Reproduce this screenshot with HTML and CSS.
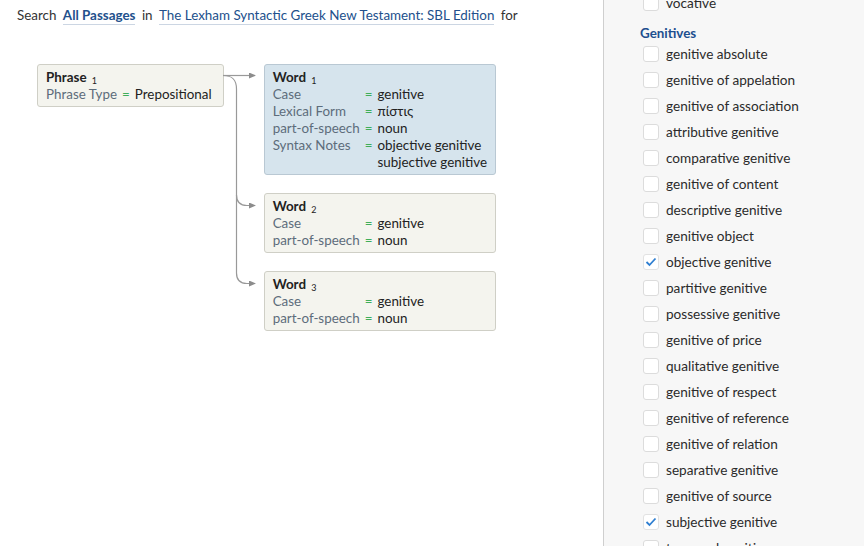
FILE: index.html
```html
<!DOCTYPE html>
<html lang="en">
<head>
    <meta charset="UTF-8">
    <title>Syntax Search</title>
    <link rel="stylesheet" href="styles.css">
</head>
<body>
    <div class="page">
        <main class="query">
            <p class="search-line">
                Search <a class="scope strong">All Passages</a> in <a class="scope">The Lexham Syntactic Greek New Testament: SBL Edition</a> for
            </p>

            <div class="diagram">
                <!-- connectors between the phrase and its words -->
                <svg class="connectors" width="240" height="240" viewBox="0 0 240 240">
                    <defs>
                        <marker id="arrow" markerWidth="7" markerHeight="6" refX="6" refY="3" orient="auto" markerUnits="userSpaceOnUse">
                            <path d="M0,0 L7,3 L0,6 Z" fill="#8c8c8c"/>
                        </marker>
                    </defs>
                    <path d="M186,11.5 H218" class="link" marker-end="url(#arrow)"/>
                    <path d="M186,11.5 C195,11.5 199.5,15 199.5,25 V209 C199.5,216 203,219.5 210,219.5 H218" class="link" marker-end="url(#arrow)"/>
                    <path d="M199.5,131 C199.5,138 203,141.5 210,141.5 H218" class="link" marker-end="url(#arrow)"/>
                </svg>

                <div class="node phrase">
                    <div class="node-title">Phrase <sub>1</sub></div>
                    <div class="props">
                        <span class="key">Phrase Type</span><span class="eq">=</span><span class="val">Prepositional</span>
                    </div>
                </div>

                <div class="words">
                    <div class="node word selected">
                        <div class="node-title">Word <sub>1</sub></div>
                        <div class="props">
                            <span class="key">Case</span><span class="eq">=</span><span class="val">genitive</span>
                            <span class="key">Lexical Form</span><span class="eq">=</span><span class="val">πίστις</span>
                            <span class="key">part-of-speech</span><span class="eq">=</span><span class="val">noun</span>
                            <span class="key">Syntax Notes</span><span class="eq">=</span><span class="val">objective genitive<br>subjective genitive</span>
                        </div>
                    </div>
                    <div class="node word">
                        <div class="node-title">Word <sub>2</sub></div>
                        <div class="props">
                            <span class="key">Case</span><span class="eq">=</span><span class="val">genitive</span>
                            <span class="key">part-of-speech</span><span class="eq">=</span><span class="val">noun</span>
                        </div>
                    </div>
                    <div class="node word">
                        <div class="node-title">Word <sub>3</sub></div>
                        <div class="props">
                            <span class="key">Case</span><span class="eq">=</span><span class="val">genitive</span>
                            <span class="key">part-of-speech</span><span class="eq">=</span><span class="val">noun</span>
                        </div>
                    </div>
                </div>
            </div>
        </main>

        <aside class="filters">
            <div class="filter-scroll">
                <label class="option"><span class="box"></span>vocative</label>

                <h3 class="group">Genitives</h3>
                <label class="option"><span class="box"></span>genitive absolute</label>
                <label class="option"><span class="box"></span>genitive of appelation</label>
                <label class="option"><span class="box"></span>genitive of association</label>
                <label class="option"><span class="box"></span>attributive genitive</label>
                <label class="option"><span class="box"></span>comparative genitive</label>
                <label class="option"><span class="box"></span>genitive of content</label>
                <label class="option"><span class="box"></span>descriptive genitive</label>
                <label class="option"><span class="box"></span>genitive object</label>
                <label class="option checked"><span class="box"><svg width="12" height="10" viewBox="0 0 12 10"><path d="M1.5,5 L4.5,8 L10.5,1.5" fill="none" stroke="#2f7fd1" stroke-width="1.8"/></svg></span>objective genitive</label>
                <label class="option"><span class="box"></span>partitive genitive</label>
                <label class="option"><span class="box"></span>possessive genitive</label>
                <label class="option"><span class="box"></span>genitive of price</label>
                <label class="option"><span class="box"></span>qualitative genitive</label>
                <label class="option"><span class="box"></span>genitive of respect</label>
                <label class="option"><span class="box"></span>genitive of reference</label>
                <label class="option"><span class="box"></span>genitive of relation</label>
                <label class="option"><span class="box"></span>separative genitive</label>
                <label class="option"><span class="box"></span>genitive of source</label>
                <label class="option checked"><span class="box"><svg width="12" height="10" viewBox="0 0 12 10"><path d="M1.5,5 L4.5,8 L10.5,1.5" fill="none" stroke="#2f7fd1" stroke-width="1.8"/></svg></span>subjective genitive</label>
                <label class="option"><span class="box"></span>temporal genitive</label>
            </div>
        </aside>
    </div>
</body>
</html>
```

FILE: styles.css
```css
html, body {
    margin: 0;
    height: 100%;
}
body {
    font-family: Lato, "Liberation Sans", sans-serif;
    font-size: 13.4px;
    color: #333;
    background: #fff;
    overflow: hidden;
}
.page {
    display: flex;
    height: 100%;
}
.query {
    flex: 1;
    min-width: 0;
}
.search-line {
    margin: 0;
    padding: 6px 0 0 17px;
    line-height: 18px;
    color: #333;
}
.scope {
    color: #22508c;
    margin: 0 3px;
    padding-bottom: 1px;
    border-bottom: 1px solid #ccd6e3;
    cursor: pointer;
}
.scope.strong {
    font-weight: 700;
}
.diagram {
    position: relative;
    display: flex;
    align-items: flex-start;
    gap: 40px;
    margin: 40px 0 0 37px;
}
.connectors {
    position: absolute;
    left: 0;
    top: 0;
    overflow: visible;
    pointer-events: none;
}
.connectors .link {
    fill: none;
    stroke: #999;
    stroke-width: 1.2;
}
.words {
    display: flex;
    flex-direction: column;
    gap: 18px;
}
.node {
    background: #f4f4ee;
    border: 1px solid #cfcfc6;
    border-radius: 3px;
    padding: 4px 8px 3px 8px;
    line-height: 17px;
}
.node.phrase {
    padding-right: 11px;
}
.node.selected {
    background: #d6e4ed;
    border-color: #b9c8d3;
}
.node-title {
    font-weight: 700;
    color: #222;
}
.node-title sub {
    font-size: 9px;
    line-height: 0;
    font-weight: 400;
    vertical-align: -2px;
    margin-left: 2px;
}
.props {
    display: grid;
    grid-template-columns: max-content max-content max-content;
    column-gap: 5px;
}
.key {
    color: #5d6c7b;
}
.eq {
    color: #3fae5a;
}
.val {
    color: #222;
}
.filters {
    width: 260px;
    flex-shrink: 0;
    border-left: 1px solid #cfcfcf;
    background: #f7f7f7;
    overflow: hidden;
}
.filter-scroll {
    margin-top: -10px;
    padding-left: 39px;
}
.group {
    margin: 9px 0 0 -3px;
    font-size: 13.4px;
    line-height: 16px;
    font-weight: 700;
    color: #1d4f8f;
}
.option {
    display: flex;
    align-items: center;
    gap: 7px;
    height: 26px;
    color: #2b2b2b;
    font-size: 13.6px;
}
.box {
    width: 16px;
    height: 16px;
    box-sizing: border-box;
    border: 1px solid #dcdcdc;
    border-radius: 3px;
    background: #fff;
    display: flex;
    align-items: center;
    justify-content: center;
}
.option.checked .box {
    border-color: #e2e2e2;
}
```
